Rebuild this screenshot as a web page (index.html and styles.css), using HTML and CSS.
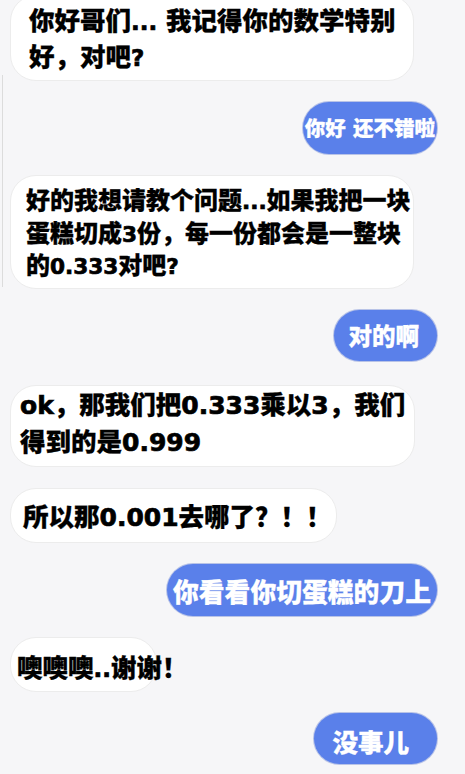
FILE: index.html
```html
<!DOCTYPE html>
<html lang="zh-CN">
<head>
<meta charset="utf-8">
<title>对话</title>
<link rel="stylesheet" href="styles.css">
</head>
<body>
<div class="chat">
  <div class="bubble left b1">你好哥们<span class="n">...</span> 我记得你的数学特别<br>好，对吧<span class="n">?</span></div>
  <div class="bubble right b2">你好 还不错啦</div>
  <div class="bubble left b3">好的我想请教个问题<span class="n">...</span>如果我把一块<br>蛋糕切成<span class="n">3</span>份，每一份都会是一整块<br>的<span class="n">0.333</span>对吧<span class="n">?</span></div>
  <div class="bubble right b4">对的啊</div>
  <div class="bubble left b5"><span class="n">ok</span>，那我们把<span class="n">0.333</span>乘以<span class="n">3</span>，我们<br>得到的是<span class="n">0.999</span></div>
  <div class="bubble left b6">所以那<span class="n">0.001</span>去哪了？！！</div>
  <div class="bubble right b7">你看看你切蛋糕的刀上</div>
  <div class="bubble left b8">噢噢噢<span class="n">..</span>谢谢！</div>
  <div class="bubble right b9">没事儿</div>
</div>
</body>
</html>
```
FILE: styles.css
```css
* { box-sizing: border-box; }
html, body {
  margin: 0;
  padding: 0;
  background: #f6f6f8;
  height: 100%;
  overflow: hidden;
}
.chat {
  position: relative;
  display: flex;
  flex-direction: column;
  gap: 21px;
  padding: 0 28px 0 10px;
  font-family: "DejaVu Sans", "Noto Sans CJK SC", sans-serif;
  font-weight: 900;
  white-space: nowrap;
  -webkit-text-stroke: 0.3px currentColor;
}
.chat::before {
  content: "";
  position: absolute;
  left: 2px;
  top: 75px;
  width: 1px;
  height: 212px;
  background: #dcdcdc;
}
.n {
  font-size: 0.9em;
  line-height: 0;
  -webkit-text-stroke: 0.7px currentColor;
}
.b5 .n, .b6 .n { font-size: 0.98em; }
.bubble { border-radius: 26px; }
.left {
  align-self: flex-start;
  background: #ffffff;
  color: #000;
  border: 1px solid #ececec;
}
.right {
  align-self: flex-end;
  background: #5a80ea;
  color: #fff;
  box-shadow: 0 0 0 1px rgba(70, 100, 200, 0.35);
}
.b1 {
  margin-top: -5px;
  width: 404px;
  font-size: 25.5px;
  line-height: 36px;
  padding: 7px 0 5px 18px;
}
.b2 {
  font-size: 20.5px;
  height: 52px;
  line-height: 48px;
  padding: 3px 2px 0 2px;
}
.b3 {
  width: 404px;
  font-size: 24px;
  line-height: 32.5px;
  padding: 9px 0 5.5px 15px;
}
.b4 {
  font-size: 23.5px;
  height: 51px;
  line-height: 48px;
  padding: 3px 18px 0 15px;
}
.b5 {
  margin-top: 3px;
  width: 405px;
  font-size: 25.5px;
  line-height: 37px;
  padding: 1px 0 5px 9px;
}
.b6 {
  width: 327px;
  font-size: 25.5px;
  height: 55px;
  line-height: 52px;
  padding: 2px 0 0 12px;
}
.b7 {
  font-size: 25.8px;
  height: 52px;
  line-height: 46px;
  padding: 6px 6px 0 6px;
}
.b8 {
  width: 147px;
  font-size: 25.5px;
  height: 55px;
  line-height: 48px;
  padding: 6px 0 0 6px;
}
.b9 {
  font-size: 25.5px;
  height: 51px;
  line-height: 42px;
  padding: 9px 28px 0 18px;
}
```
